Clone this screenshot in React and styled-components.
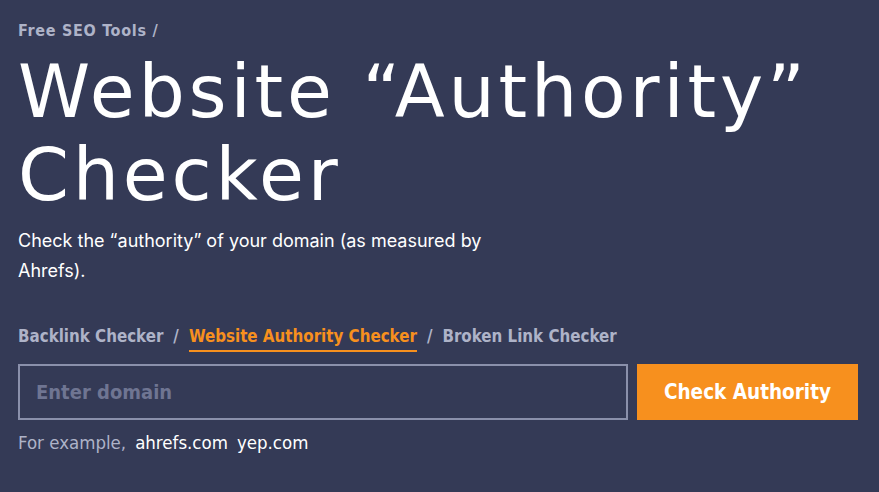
import React from 'react';
import styled, { createGlobalStyle } from 'styled-components';

const GlobalStyle = createGlobalStyle`
    html, body {
        margin: 0;
        padding: 0;
        background: #343a56;
    }
    body {
        font-family: Inter, "Noto Sans", sans-serif;
        color: #ffffff;
    }
`;

const Page = styled.div`
    width: 879px;
    height: 492px;
    background: #343a56;
    padding: 20px 18px 0 18px;
    box-sizing: border-box;
    overflow: hidden;
`;

const Crumbs = styled.div`
    font-family: "DejaVu Sans Condensed", "DejaVu Sans", sans-serif;
    font-weight: 700;
    font-size: 16px;
    letter-spacing: 0.7px;
    color: #aeb3c8;
    line-height: 22px;
`;

const Title = styled.h1`
    margin: 8px 0 0 0;
    font-family: "DejaVu Sans", sans-serif;
    font-weight: 400;
    font-size: 73px;
    line-height: 83px;
    letter-spacing: 3.8px;
    color: #ffffff;
`;

const Lead = styled.p`
    margin: 10px 0 0 0;
    width: 490px;
    font-size: 18px;
    line-height: 30px;
    color: #ffffff;
`;

const Tabs = styled.nav`
    display: flex;
    align-items: center;
    gap: 10px;
    margin-top: 40px;
    font-family: "DejaVu Sans Condensed", "DejaVu Sans", sans-serif;
    font-weight: 700;
    font-size: 16.8px;
    color: #aeb3c8;
`;

const Tab = styled.span`
    color: ${p => (p.$active ? '#f7901e' : '#aeb3c8')};
    border-bottom: 2px solid ${p => (p.$active ? '#f7901e' : 'transparent')};
    padding-bottom: 4px;
`;

const Sep = styled.span`
    padding-bottom: 6px;
`;

const Form = styled.div`
    display: flex;
    gap: 9px;
    margin-top: 12px;
`;

const Input = styled.input`
    width: 610px;
    height: 56px;
    box-sizing: border-box;
    background: transparent;
    border: 2px solid #8a90ab;
    padding: 0 16px;
    font-family: "DejaVu Sans Condensed", "DejaVu Sans", sans-serif;
    font-weight: 700;
    font-size: 20px;
    color: #ffffff;
    outline: none;
    &::placeholder {
        color: #6f7592;
    }
`;

const Button = styled.button`
    width: 221px;
    height: 56px;
    border: none;
    background: #f7901e;
    color: #ffffff;
    font-family: "DejaVu Sans Condensed", "DejaVu Sans", sans-serif;
    font-weight: 700;
    font-size: 20.5px;
    cursor: pointer;
`;

const Example = styled.div`
    display: flex;
    gap: 9px;
    margin-top: 12px;
    font-family: "DejaVu Sans Condensed", "DejaVu Sans", sans-serif;
    font-size: 18.5px;
    color: #aeb3c8;
`;

const ExampleLink = styled.span`
    color: #ffffff;
`;

const App = () => {
    return (
        <>
            <GlobalStyle />
            <Page>
                <Crumbs>Free SEO Tools /</Crumbs>
                <Title>
                    Website “Authority”
                    <br />
                    Checker
                </Title>
                <Lead>Check the “authority” of your domain (as measured by Ahrefs).</Lead>
                <Tabs>
                    <Tab>Backlink Checker</Tab>
                    <Sep>/</Sep>
                    <Tab $active>Website Authority Checker</Tab>
                    <Sep>/</Sep>
                    <Tab>Broken Link Checker</Tab>
                </Tabs>
                <Form>
                    <Input placeholder="Enter domain" />
                    <Button>Check Authority</Button>
                </Form>
                <Example>
                    <span>For example,</span>
                    <ExampleLink>ahrefs.com</ExampleLink>
                    <ExampleLink>yep.com</ExampleLink>
                </Example>
            </Page>
        </>
    );
};

export default App;
